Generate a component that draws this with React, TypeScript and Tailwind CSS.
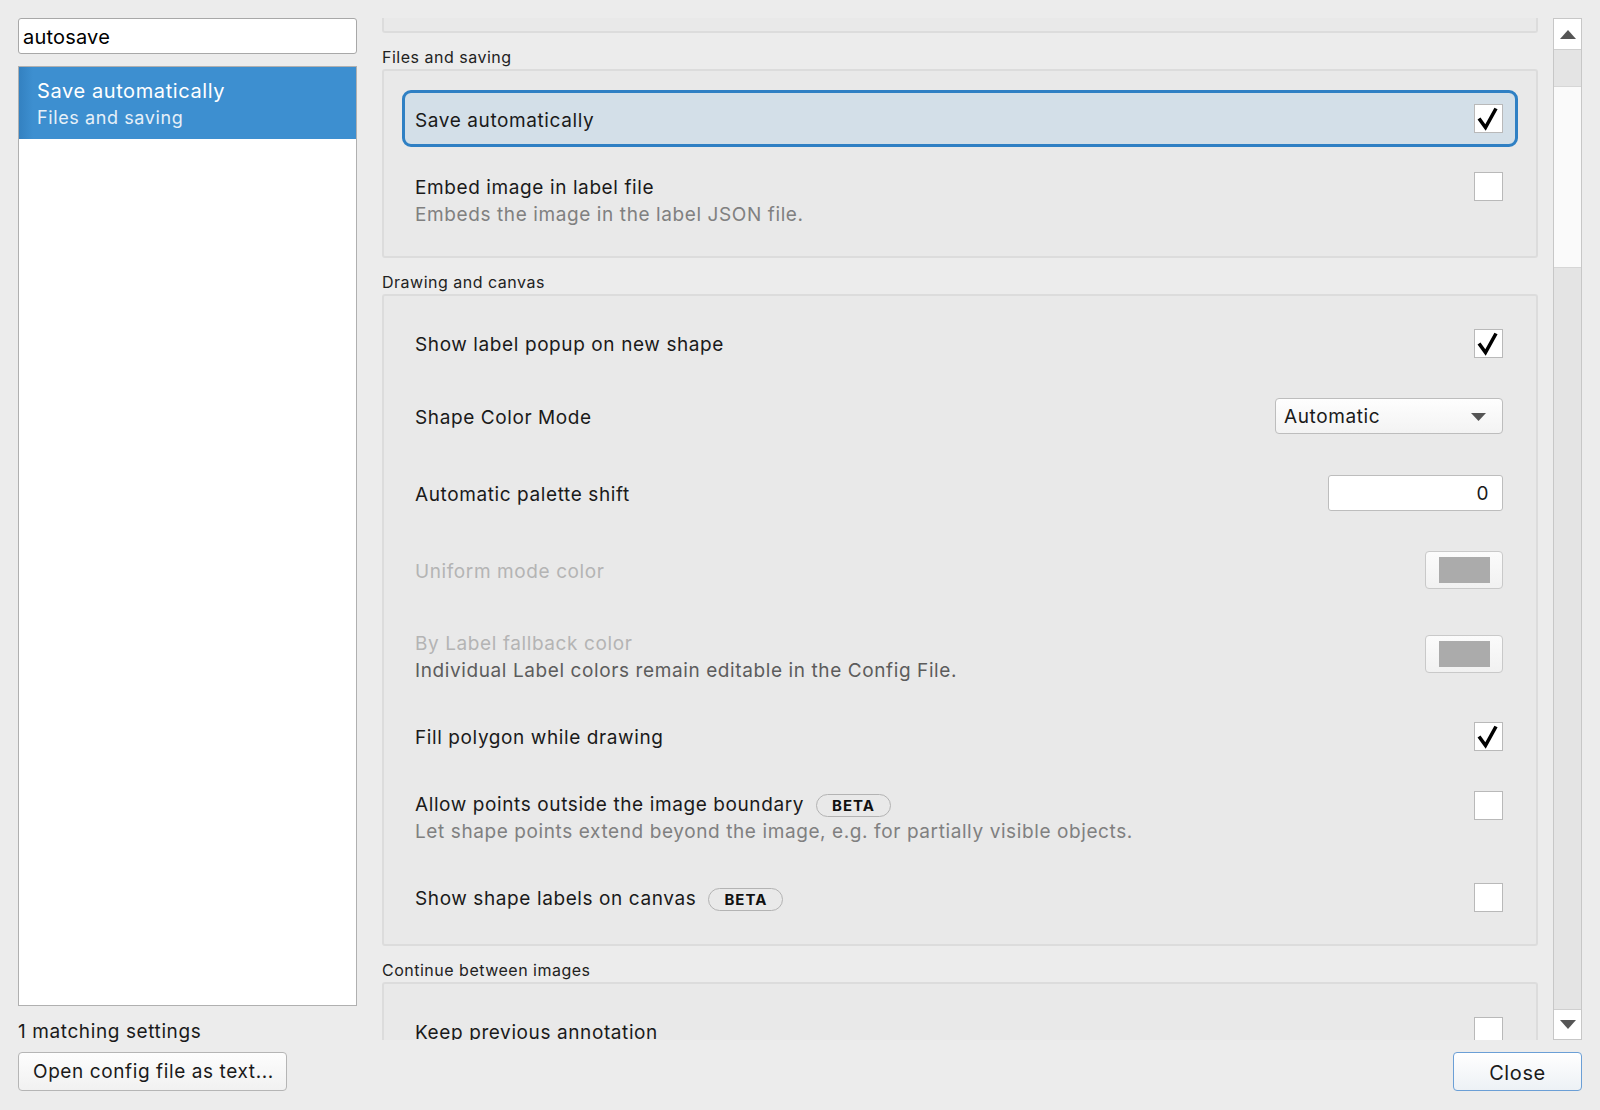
import React from "react";

/**
 * Preferences dialog — search list on the left, scrolling settings groups on the right.
 */

function CheckBox({ checked = false }: { checked?: boolean }) {
  return (
    <div className="relative h-[29px] w-[29px] shrink-0 border border-[#b9b9b9] bg-white">
      {checked && (
        <svg className="absolute left-0 top-0" width="27" height="27" viewBox="0 0 27 27">
          <path d="M4 13.5 L10.5 22.5 L21 3.5" fill="none" stroke="#000" strokeWidth="3.6" />
        </svg>
      )}
    </div>
  );
}

function ColorButton() {
  return (
    <div className="flex h-[38px] w-[78px] shrink-0 items-center justify-center rounded-[4px] border border-[#c9c9c9] bg-[linear-gradient(#fbfbfb,#f1f1f1)]">
      <div className="h-[26px] w-[51px] bg-[#ababab]" />
    </div>
  );
}

function Beta() {
  return (
    <span className="ml-[12px] inline-flex h-[23px] items-center rounded-full border-[1.5px] border-[#b3b3b3] px-[15px] pt-[1px] text-[15px] font-bold tracking-[1px] text-[#111]">
      BETA
    </span>
  );
}

function Row({
  title,
  desc,
  control,
  height,
  highlight = false,
  disabled = false,
  beta = false,
  darkDesc = false,
  controlClass = "",
}: {
  title: string;
  desc?: string;
  control: React.ReactNode;
  height: number;
  highlight?: boolean;
  disabled?: boolean;
  beta?: boolean;
  darkDesc?: boolean;
  controlClass?: string;
}) {
  return (
    <div
      style={{ height }}
      className={`flex items-center rounded-[9px] border-[3px] pl-[10px] pr-[12px] ${
        highlight ? "border-[#2f80c4] bg-[#d3dfe8]" : "border-transparent"
      }`}
    >
      <div className="flex w-full items-start justify-between">
        <div className="flex flex-col">
          <div
            className={`flex h-[27px] items-center pt-[5px] text-[19px] ${
              disabled ? "text-[#b4b4b4]" : "text-[#1a1a1a]"
            }`}
          >
            {title}
            {beta && <Beta />}
          </div>
          {desc && (
            <div
              className={`flex h-[27px] items-center pt-[5px] text-[19px] ${
                darkDesc ? "text-[#5c5c5c]" : "text-[#808080]"
              }`}
            >
              {desc}
            </div>
          )}
        </div>
        <div className={`flex h-[27px] items-center ${controlClass}`}>{control}</div>
      </div>
    </div>
  );
}

function SectionLabel({ text }: { text: string }) {
  return (
    <div className="mb-[2px] mt-[10px] h-[24px] pt-[2px] text-[16px] leading-[24px] tracking-[0.5px] text-[#222]">
      {text}
    </div>
  );
}

function Group({ children, className = "" }: { children: React.ReactNode; className?: string }) {
  return (
    <div className={`shrink-0 rounded-[3px] border-2 border-[#dcdcdc] bg-[#e9e9e9] px-[18px] ${className}`}>
      {children}
    </div>
  );
}

function ScrollBar() {
  return (
    <div className="flex h-full w-[29px] shrink-0 flex-col border border-[#c7c7c7] bg-[#e4e4e4]">
      <div className="flex h-[31px] items-center justify-center border-b border-[#cfcfcf] bg-white">
        <svg width="16" height="9" viewBox="0 0 16 9">
          <path d="M0 9 L8 0 L16 9 Z" fill="#555" />
        </svg>
      </div>
      <div className="h-[36px]" />
      <div className="h-[182px] border-y border-[#d6d6d6] bg-[#fafafa]" />
      <div className="flex-1" />
      <div className="flex h-[30px] items-center justify-center border-t border-[#cfcfcf] bg-white">
        <svg width="16" height="9" viewBox="0 0 16 9">
          <path d="M0 0 L8 9 L16 0 Z" fill="#555" />
        </svg>
      </div>
    </div>
  );
}

export default function App() {
  return (
    <div className="flex h-[1110px] w-[1600px] overflow-hidden bg-[#ececec] pt-[18px] font-['Inter',sans-serif] tracking-[0.6px] text-[#1a1a1a]">
      {/* Left: search + results */}
      <div className="ml-[18px] flex w-[339px] shrink-0 flex-col">
        <div className="flex h-[36px] items-center rounded-[3px] border border-[#a8a8a8] bg-white pl-[4px] pt-[2px] text-[20px] tracking-[0.2px] text-black">
          autosave
        </div>
        <div className="mt-[12px] h-[940px] border border-[#b0b0b0] bg-white">
          <div className="flex h-[72px] flex-col justify-center bg-[linear-gradient(to_right,#3381c1_0px,#3d8fd0_14px,#3d8fd0_100%)] pl-[18px] pt-[3px] text-white">
            <div className="text-[20px] leading-[27px]">Save automatically</div>
            <div className="text-[18px] leading-[26px] text-[#e6f0f8]">Files and saving</div>
          </div>
        </div>
        <div className="mt-[10px] h-[26px] pt-[3px] text-[19px] leading-[26px]">1 matching settings</div>
        <div className="mt-[10px] flex h-[39px] w-[269px] items-center rounded-[4px] border border-[#b5b5b5] bg-[linear-gradient(#fdfdfd,#f1f1f1)] pl-[14px] pt-[2px] text-[19px]">
          Open config file as text...
        </div>
      </div>

      {/* Right: settings scroll area */}
      <div className="ml-[25px] flex flex-col">
        <div className="flex h-[1022px]">
          <div className="flex w-[1156px] flex-col overflow-hidden">
            <div className="h-[15px] shrink-0 rounded-b-[3px] border-x-2 border-b-2 border-[#dcdcdc] bg-[#e9e9e9]" />

            <SectionLabel text="Files and saving" />
            <Group className="pb-[4px] pt-[19px]">
              <Row title="Save automatically" height={57} highlight control={<CheckBox checked />} />
              <Row
                title="Embed image in label file"
                desc="Embeds the image in the label JSON file."
                height={105}
                control={<CheckBox />}
              />
            </Group>

            <SectionLabel text="Drawing and canvas" />
            <Group className="pb-[13px] pt-[13px]">
              <Row title="Show label popup on new shape" height={68} control={<CheckBox checked />} />
              <Row
                title="Shape Color Mode"
                height={78}
                control={
                  <div className="flex h-[36px] w-[228px] items-center justify-between rounded-[4px] border border-[#bdbdbd] bg-[linear-gradient(#fefefe,#f3f3f3)] pl-[8px] pr-[16px] pt-[2px] text-[19px]">
                    Automatic
                    <svg width="15" height="8" viewBox="0 0 15 8">
                      <path d="M0 0 L7.5 8 L15 0 Z" fill="#555" />
                    </svg>
                  </div>
                }
              />
              <Row
                title="Automatic palette shift"
                height={76}
                control={
                  <div className="flex h-[36px] w-[175px] items-center justify-end rounded-[3px] border border-[#bdbdbd] bg-white pr-[13px] pt-[2px] text-[19px]">
                    0
                  </div>
                }
              />
              <Row title="Uniform mode color" height={78} disabled control={<ColorButton />} />
              <Row
                title="By Label fallback color"
                desc="Individual Label colors remain editable in the Config File."
                height={93}
                disabled
                darkDesc
                controlClass="mt-[12px]"
                control={<ColorButton />}
              />
              <Row title="Fill polygon while drawing" height={68} control={<CheckBox checked />} />
              <Row
                title="Allow points outside the image boundary"
                desc="Let shape points extend beyond the image, e.g. for partially visible objects."
                height={93}
                beta
                controlClass="mt-[2px]"
                control={<CheckBox />}
              />
              <Row title="Show shape labels on canvas" height={68} beta control={<CheckBox />} />
            </Group>

            <SectionLabel text="Continue between images" />
            <Group className="pb-[13px] pt-[13px]">
              <Row title="Keep previous annotation" height={68} control={<CheckBox />} />
            </Group>
          </div>
          <div className="ml-[15px] h-full">
            <ScrollBar />
          </div>
        </div>
        <div className="mt-[12px] flex justify-end">
          <div className="flex h-[39px] w-[129px] items-center justify-center rounded-[4px] border border-[#6b9fd6] bg-[linear-gradient(#ffffff,#edf1f5)] pt-[2px] text-[20px]">
            Close
          </div>
        </div>
      </div>
    </div>
  );
}
